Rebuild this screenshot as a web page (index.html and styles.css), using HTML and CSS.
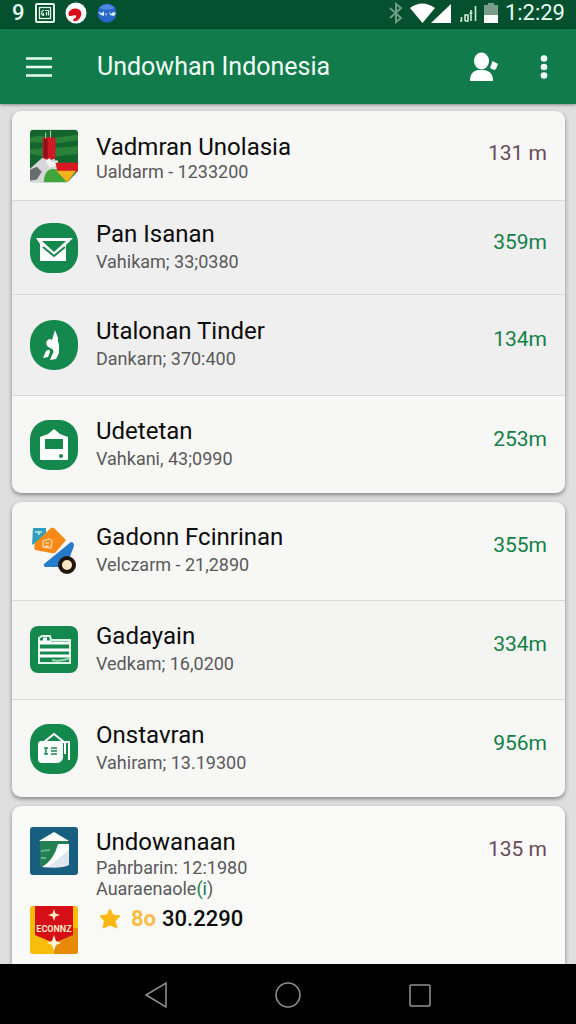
FILE: index.html
```html
<!DOCTYPE html>
<html lang="id">
<head>
<meta charset="utf-8">
<meta name="viewport" content="width=device-width, initial-scale=1">
<title>Undowhan Indonesia</title>
<link rel="stylesheet" href="styles.css">
</head>
<body>
<div class="status">
  <div class="status-group status-left">
    <span>9</span>
    <svg width="20" height="20" viewBox="0 0 20 20" fill="none" stroke="#e4f5ea"><rect x="1" y="1" width="18" height="18" rx="1" stroke-width="2"/><rect x="4.500" y="4.500" width="11" height="11" stroke-width="1.300"/><path d="M9 7.500C6 7 6 12.500 8.500 12.500V10M10 7.500h3.500v5M11.500 9v3.500" stroke-width="1.200"/></svg>
    <svg width="22" height="22" viewBox="0 0 22 22"><circle cx="11" cy="11" r="10.500" fill="#fff"/><path d="M3.500 11C5 7 10 5.500 14 7.500c3.500 2 3 7-1 10.500-1.500 1.500-5 1.500-5 0 1-2 4-2 3-4.500C9 12.500 7 14 4 14z" fill="#d90b16"/></svg>
    <svg width="20" height="20" viewBox="0 0 20 20"><circle cx="10" cy="10" r="9.500" fill="#2767c9"/><path d="M2 5Q10-2 18 5Q10 8 2 5z" fill="#4f8de5"/><path d="M1 9l4 1 2-2v5l-3-1zM12 8l2 3 2-2 3 1-2 3-4-1zM8 10l2 1-1 2z" fill="#d9eef8"/></svg>
  </div>
  <div class="status-group status-right">
    <svg width="14" height="22" viewBox="0 0 14 22" fill="none" stroke="#6f9c84" stroke-width="2"><path d="M1 6l11 10-5 4V2l5 4L1 16"/></svg>
    <svg width="42" height="20" viewBox="0 0 42 20" fill="#fff"><path d="M0 5Q12-4 25 5L12.500 20z"/><path d="M41 1v19H21z"/></svg>
    <svg width="18" height="18" viewBox="0 0 18 18" fill="none" stroke="#cfe8da" stroke-width="1.600"><path d="M1 17h1.500v-4M6 17v-6h3v6H6M12 17V6M10.500 9h3M16.500 2v15"/></svg>
    <svg width="14" height="20" viewBox="0 0 14 20"><path d="M4 0h6v2h4v10H0V2h4z" fill="#789d89"/><path d="M0 12h14v8H0z" fill="#fff"/></svg>
    <span>1:2:29</span>
  </div>
</div>
<header class="appbar">
  <button class="icon-btn" aria-label="Menu"><svg width="26" height="20" viewBox="0 0 26 20" stroke="#e6fff1" stroke-width="2.600"><path d="M0 1.500h26M0 10h26M0 18.500h26"/></svg></button>
  <h1 class="appbar-title">Undowhan Indonesia</h1>
  <button class="icon-btn" aria-label="Akun"><svg width="30" height="30" viewBox="0 0 30 30" fill="#fff"><ellipse cx="12.500" cy="9" rx="7.500" ry="8.500"/><path d="M1 29c0-7 3-10 8-11h6c6 1 9 4 9 11zM23.500 9l5.500 3-2 5-2 1-4-2z"/></svg></button>
  <button class="icon-btn" aria-label="Lainnya"><svg width="8" height="24" viewBox="0 0 8 24" fill="#f1fff7"><circle cx="4" cy="3.500" r="3.300"/><circle cx="4" cy="12" r="3.300"/><circle cx="4" cy="20.500" r="3.300"/></svg></button>
</header>
<main class="content">
  <section class="card">
    <a class="row row-first" href="#">
      <svg class="icon-tall" viewBox="0 0 49 54"><defs><clipPath id="photo"><path d="M4 0h41q4 0 4 4v38L38 54H4q-4 0-4-4V4q0-4 4-4z"/></clipPath></defs><g clip-path="url(#photo)"><path d="M0 0h49v54H0z" fill="#14642d"/><path d="M0 8l10-2 12 3 27-4v6l-22 3-27-1zM0 20l14-1 35-2v8L20 28 0 25z" fill="#2a8138"/><path d="M0 40l10-9 5-4 10 3 4 6 3 8-8 10H0z" fill="#d5d7d8"/><path d="M0 41l7-3 5 5-5 8-7 1z" fill="#696c70"/><path d="M13 9q6-3 13 0v20q-6 4-13 0z" fill="#cf1925"/><path d="M14 9h4v20h-4z" fill="#8f101c"/><path d="M16 9V3m5 5V1" stroke="#b7d9b6"/><path d="M16 32l4-3 3 5 5-3 1 5-9 3z" fill="#f2f2f2"/><path d="M14 54q1-17 14-13l11 13z" fill="#41a43b"/><path d="M26 34h23v9H28z" fill="#d81921"/><path d="M27 42h20l-9 12z" fill="#f6b319"/></g></svg>
      <span class="text text-tight"><span class="name">Vadmran Unolasia</span><span class="sub">Ualdarm - 1233200</span></span>
      <span class="amount amount-muted">131 m</span>
    </a>
    <a class="row row-compact row-shade" href="#">
      <svg class="icon" viewBox="0 0 48 50"><rect width="48" height="50" rx="20" fill="#15884e"/><path d="M6 15h37l-7 7v16H10V21z" fill="#fff"/><path d="M12 18h24L24 29z" fill="#15884e"/><path d="M13 24l11 9 11-9" fill="none" stroke="#15884e" stroke-width="2"/></svg>
      <span class="text"><span class="name">Pan Isanan</span><span class="sub">Vahikam; 33;0380</span></span>
      <span class="amount">359m</span>
    </a>
    <a class="row row-roomy row-shade" href="#">
      <svg class="icon" viewBox="0 0 48 50"><rect width="48" height="50" rx="23" fill="#15884e"/><path d="M25 10l3 8v4l1 2v9l-3 6-6 1 2-5c3-4 1-6-2-7-5-2-5-8 0-9l2 1z" fill="#fff"/><path d="M16 31q4-3 4 1l-2 5-5 1z" fill="#fff"/></svg>
      <span class="text"><span class="name">Utalonan Tinder</span><span class="sub">Dankarn; 370:400</span></span>
      <span class="amount">134m</span>
    </a>
    <a class="row" href="#">
      <svg class="icon" viewBox="0 0 48 50"><rect width="48" height="50" rx="19" fill="#15884e"/><path d="M10 17l8-3 6-5 6 5 8 3v22q0 1-1 1H11q-1 0-1-1z" fill="#fff"/><path d="M15 19h18v10H15z" fill="#15884e"/><circle cx="31" cy="36" r="2" fill="#15884e"/></svg>
      <span class="text"><span class="name">Udetetan</span><span class="sub">Vahkani, 43;0990</span></span>
      <span class="amount">253m</span>
    </a>
  </section>
  <section class="card">
    <a class="row" href="#">
      <svg class="icon" viewBox="0 0 48 50"><path d="M3 2h13v9L2 19z" fill="#319dbc"/><path d="M5 6h7m-3 0v3" stroke="#c5edf1" stroke-width="1.500"/><path d="M41 16q3 0 3 4l-8 21H16q-3 0-2-3z" fill="#247bca"/><path d="M21 2q1-1 3 0l12 12-10 12q-2 2-5 1L5 24q-2-5 1-8z" fill="#f88916"/><path d="M13 15l6-2 3 2-1 7-8-1zM15 17h4m-4 3h4" fill="none" stroke="#ffd097" stroke-width="1.500"/><circle cx="37" cy="39" r="7" fill="#ffe8c4" stroke="#22160e" stroke-width="4"/></svg>
      <span class="text"><span class="name">Gadonn Fcinrinan</span><span class="sub">Velczarm - 21,2890</span></span>
      <span class="amount">355m</span>
    </a>
    <a class="row row-shade-light" href="#">
      <svg class="icon" viewBox="0 0 48 50"><rect y="1" width="48" height="47" rx="8" fill="#15884e"/><path d="M9 38V13l3-2h8l1 4h19v23z" fill="none" stroke="#dff8e9" stroke-width="2"/><path d="M9 17h12m-8-3h4M9 18h31M9 25h31M9 31h31" stroke="#fff" stroke-width="3"/><path d="M22 35q9 2 18-2" fill="none" stroke="#9fd8b5" stroke-width="2"/></svg>
      <span class="text"><span class="name">Gadayain</span><span class="sub">Vedkam; 16,0200</span></span>
      <span class="amount">334m</span>
    </a>
    <a class="row" href="#">
      <svg class="icon" viewBox="0 0 48 50"><rect width="48" height="50" rx="19" fill="#15884e"/><path d="M10 17h23v17q-1 4-5 5H12q-4 0-4-4V19z" fill="#fff"/><path d="M14 18l10-8 10 8M33 18h6v18M35 18v12" fill="none" stroke="#fff" stroke-width="2"/><path d="M14 24h4m-2 0v6m-2 0h4M21 24h6m-6 3h6m-6 3h6" stroke="#15884e" stroke-width="1.500"/></svg>
      <span class="text"><span class="name">Onstavran</span><span class="sub">Vahiram; 13.19300</span></span>
      <span class="amount">956m</span>
    </a>
  </section>
  <section class="card card-last">
    <div class="row-top">
      <svg class="icon" viewBox="0 0 48 50"><rect y="1" width="48" height="48" rx="3" fill="#185e80"/><path d="M10 14l14-8 14 8v25q-7 4-28 1z" fill="#238052"/><path d="M9 15l15-9 15 9z" fill="#fff"/><path d="M12 41q15-3 21-23h6v21q-8 4-27 2z" fill="#dfe6ed"/><path d="M28 18h11v6L18 41h-6q12-7 16-23z" fill="#fff"/><path d="M11 25l9-1M11 32h5" stroke="#63af83" stroke-width="2"/></svg>
      <span class="text"><span class="name">Undowanaan</span><span class="sub sub-snug">Pahrbarin: 12:1980</span><span class="sub sub-snug">Auaraenaole<span class="green">(i</span>)</span></span>
      <span class="amount amount-muted">135 m</span>
    </div>
    <div class="row-rating">
      <svg class="icon" viewBox="0 0 48 50"><defs><clipPath id="badge"><rect y="1" width="48" height="48" rx="3"/></clipPath></defs><g clip-path="url(#badge)"><path d="M0 0h48v50H0z" fill="#f8bd0b"/><path d="M24 29L42 23h6v27H24z" fill="#e68a08"/><path d="M5 0h38v30l-19 8L5 30z" fill="#d60e16"/><path d="M24 4l1.500 4.500L30 10l-4.500 1.500L24 16l-1.500-4.500L18 10l4.500-1.500z" fill="#ffecc2"/><path d="M24 30l2 6 5 2-5 2-2 6-2-6-5-2 5-2z" fill="#fff6d8"/><text x="24" y="27" class="badge-text" text-anchor="middle">ECONNZ</text></g></svg>
      <span class="rating">
        <svg width="22" height="22" viewBox="0 0 22 22"><path d="M11 1l3 6 7 1-5 5 2 7-7-3-7 3 1.500-7L1 8l7-1z" fill="#fbb811" stroke="#fbb811" stroke-linejoin="round"/></svg>
        <span class="score">8o</span>
        <strong class="total">30.2290</strong>
      </span>
    </div>
  </section>
</main>
<nav class="navbar">
  <button class="nav-btn" aria-label="Kembali"><svg width="26" height="28" viewBox="0 0 26 28"><path d="M23 2v24L3 14z"/></svg></button>
  <button class="nav-btn" aria-label="Beranda"><svg width="26" height="28" viewBox="0 0 26 28"><circle cx="13" cy="14" r="12"/></svg></button>
  <button class="nav-btn" aria-label="Terkini"><svg width="26" height="28" viewBox="0 0 26 28"><rect x="3" y="4" width="20" height="21" rx="1"/></svg></button>
</nav>
</body>
</html>
```

FILE: styles.css
```css
* { box-sizing: border-box; }

body {
  margin: 0;
  min-height: 100vh;
  display: flex;
  flex-direction: column;
  background: #dfdfdf;
  font-family: Roboto, "Liberation Sans", sans-serif;
  color: #0c0c0c;
}

svg { display: block; flex: none; }

button {
  padding: 0;
  border: 0;
  background: none;
}

.status {
  display: flex;
  justify-content: space-between;
  align-items: center;
  padding: 0 11px 4px 12px;
  background: #05502f;
  color: #e6fff1;
  font-size: 22px;
  font-weight: 500;
  line-height: 25px;
}

.status-group { display: flex; align-items: center; }
.status-left { gap: 10px; }
.status-right { gap: 7px; font-weight: 400; }

.appbar {
  display: flex;
  align-items: center;
  padding: 22px 28px 21px 26px;
  background: #127b4c;
  box-shadow: 0 1px 3px #00000066;
}

.appbar-title {
  flex: 1;
  margin: 0 0 0 45px;
  font-size: 25px;
  font-weight: 400;
  line-height: 32px;
  color: #f1fff7;
}

.icon-btn + .icon-btn { margin-left: 41px; }

.content {
  flex: 1;
  display: flex;
  flex-direction: column;
  gap: 9px;
  padding: 7px 11px 0 12px;
}

.card {
  border-radius: 9px;
  overflow: hidden;
  background: #f7f7f6;
  box-shadow: 0 2px 4px #00000066;
}

.card-last {
  flex: 1;
  border-radius: 9px 9px 0 0;
  background: #f9f9f8;
}

.row,
.row-top {
  display: flex;
  align-items: center;
  gap: 18px;
  padding: 21px 18px;
  color: inherit;
  text-decoration: none;
}

.row + .row { border-top: 1px solid #d8d8d8; }
.row:last-child { padding-block: 21px 20px; }
.row-first { padding-block: 17px; }
.row-compact { padding-block: 19px 18px; }
.row-roomy { padding-block: 22px; }
.row-shade { background: #efefef; }
.row-shade-light { background: #f4f4f3; }
.row-top { align-items: flex-start; padding-block: 20px 0; }

.icon { width: 48px; height: 50px; }
.icon-tall { width: 48px; height: 54px; }

.text {
  flex: 1;
  display: flex;
  flex-direction: column;
}

.text-tight { padding-top: 5px; }
.text-tight .sub { line-height: 22px; }

.name { font-size: 24px; line-height: 28px; }

.sub {
  font-size: 18px;
  line-height: 28px;
  color: #5a5a5a;
}

.sub-snug { line-height: 21px; }
.green { color: #127b4c; }

.amount {
  padding-bottom: 12px;
  font-size: 21px;
  line-height: 24px;
  color: #138047;
}

.amount-muted { color: #6b4a58; }
.row-first .amount { padding-bottom: 6px; }
.row-top .amount { padding-top: 11px; }
.row-top .text { padding-top: 2px; }
.row-top .name { padding-bottom: 1px; }

.row-rating {
  display: flex;
  align-items: flex-start;
  gap: 21px;
  padding: 6px 18px 5px;
}

.rating {
  display: flex;
  align-items: center;
  gap: 6px;
  font-size: 22px;
  line-height: 28px;
}

.score { padding-left: 4px; color: #fbbc45; font-weight: 700; }
.total { font-weight: 500; }

.badge-text {
  font-family: Roboto, sans-serif;
  font-size: 9px;
  font-weight: 700;
  fill: #ffe9c9;
}

.navbar {
  display: flex;
  justify-content: center;
  align-items: center;
  gap: 106px;
  padding: 17px 0 15px;
  background: #000;
}

.nav-btn svg {
  fill: none;
  stroke: #929292;
  stroke-width: 1.5;
}
```
